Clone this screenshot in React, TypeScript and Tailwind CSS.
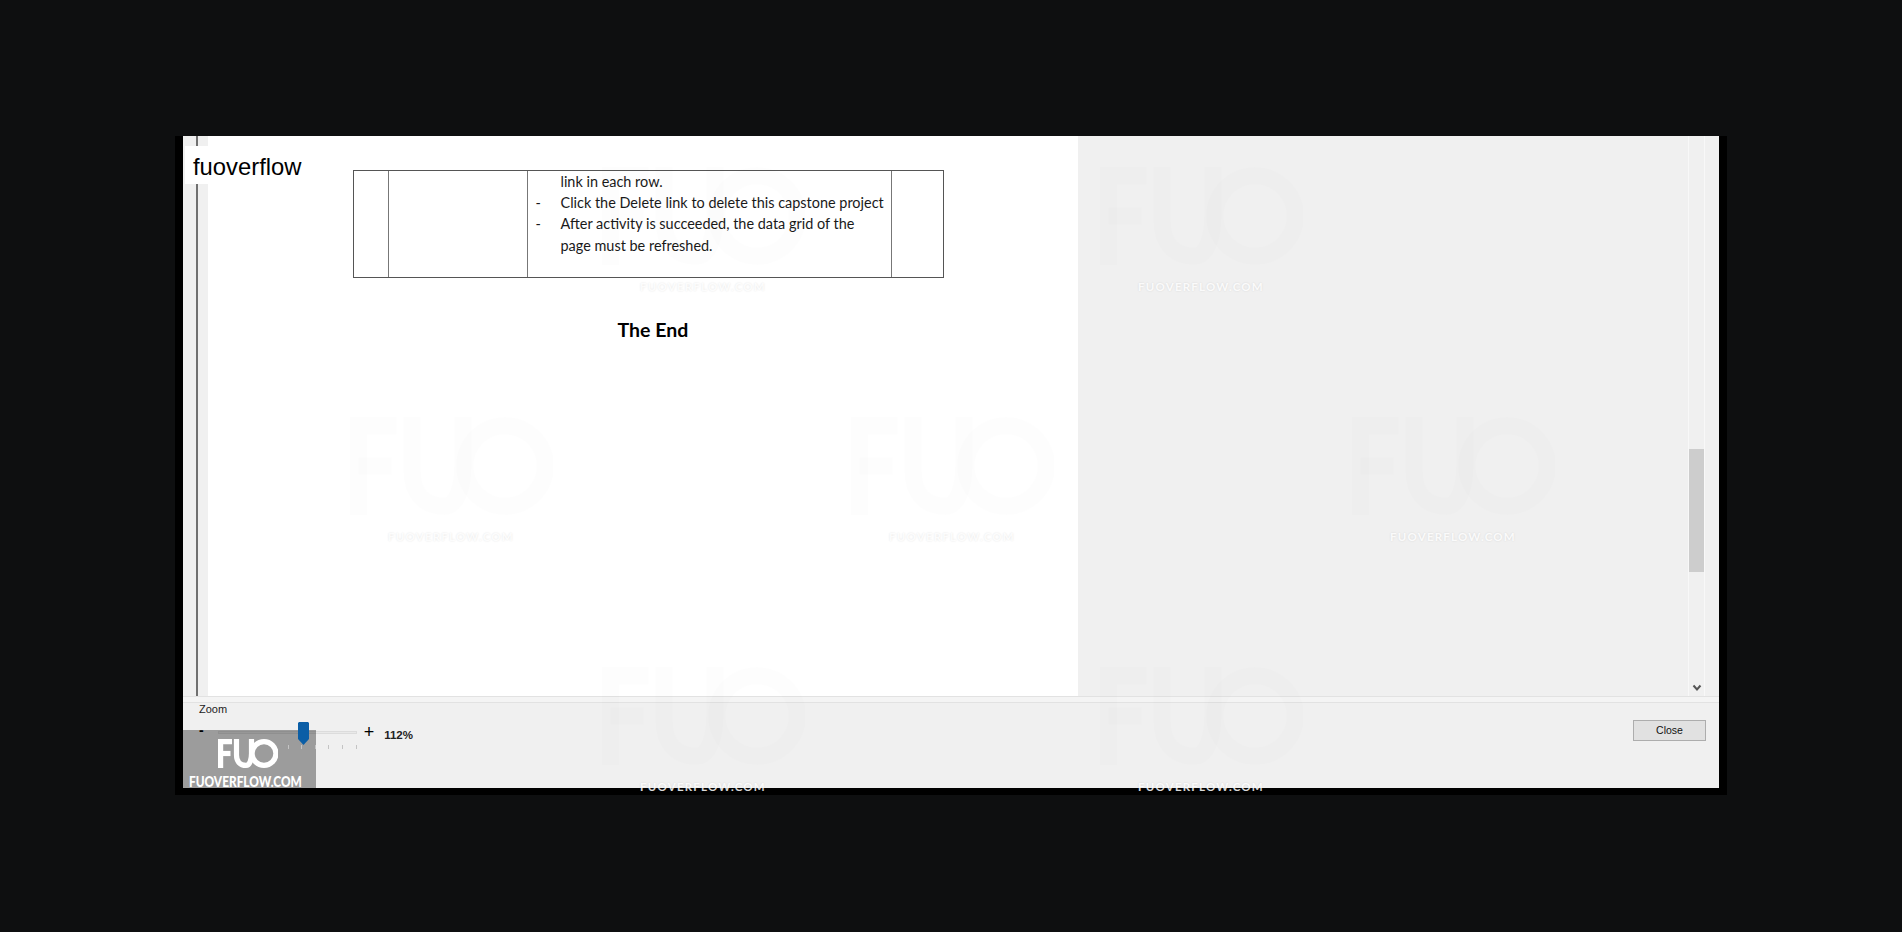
import React from 'react';

const sans = "font-['Liberation_Sans',Arial,sans-serif]";
const doc = "font-['Lato','Noto_Sans',sans-serif]";

// merged FUO mark, used for the corner badge and the faint page watermarks
const FuoMark = ({ className }: { className: string }) => (
  <svg viewBox="0 0 60 29" className={className} fill="none" stroke="currentColor" strokeWidth="5.200">
    <path d="M2.600 29V2.600H14" />
    <path d="M2.600 14.500H12.500" />
    <path d="M18.500 0V16C18.500 22.500 22 26.400 28 26.400C32 26.400 33.500 20 33.500 14.500V0" />
    <circle cx="46" cy="14.500" r="11.900" />
  </svg>
);

const marks = [
  { left: 'left-[601px]', top: 'top-[167px]' },
  { left: 'left-[1099px]', top: 'top-[167px]' },
  { left: 'left-[349px]', top: 'top-[417px]' },
  { left: 'left-[850px]', top: 'top-[417px]' },
  { left: 'left-[1351px]', top: 'top-[417px]' },
  { left: 'left-[601px]', top: 'top-[667px]' },
  { left: 'left-[1099px]', top: 'top-[667px]' },
];

const Watermark = ({ left, top }: { left: string; top: string }) => (
  <div className={`absolute ${left} ${top} pointer-events-none flex w-[204px] flex-col items-center`}>
    <FuoMark className="h-[98px] w-[204px] text-black/[0.008]" />
    <span className={`${doc} mt-[15px] text-[11.500px] font-bold leading-[14px] tracking-[1.2px] text-white/85 [text-shadow:0_0_2px_rgba(0,0,0,0.12)]`}>
      FUOVERFLOW.COM
    </span>
  </div>
);

const Row = ({ dash, children }: { dash?: boolean; children: React.ReactNode }) => (
  <div className="flex h-[21.300px] items-center">
    <span className="w-[33px] shrink-0 pl-[8px]">{dash ? '-' : ''}</span>
    <span className="shrink-0 whitespace-nowrap">{children}</span>
  </div>
);

const SpecTable = () => (
  <div className={`${doc} ml-[145px] mt-[34px] flex h-[108px] w-[591px] border border-[#555] text-[14.450px] text-[#1a1a1a]`}>
    <div className="w-[35px] border-r border-r-[#777]" />
    <div className="w-[139px] border-r border-r-[#777]" />
    <div className="w-[364px] border-r border-r-[#777]">
      <Row>link in each row.</Row>
      <Row dash>Click the Delete link to delete this capstone project</Row>
      <Row dash>After activity is succeeded, the data grid of the</Row>
      <Row>page must be refreshed.</Row>
    </div>
  </div>
);

const Scrollbar = () => (
  <div className="ml-auto mr-[14px] flex w-[17px] flex-col border-x border-x-[#f8f8f8]">
    <div className="mt-[313px] h-[123px] bg-[#cdcdcd]" />
    <div className="mt-auto mb-[4px] flex justify-center">
      <svg width="10" height="8" viewBox="0 0 10 8" fill="none" stroke="#555" strokeWidth="2">
        <path d="M1.500 1.500L5 5.500L8.500 1.500" />
      </svg>
    </div>
  </div>
);

const ZoomSlider = () => (
  <div className="relative ml-[14px] mt-[1px] h-[26px] w-[139px]">
    <div className="absolute left-0 right-0 top-[10px] h-[3px] border border-[#dcdcdc] bg-[#e9e9e9]" />
    <svg className="absolute left-[80px] top-0 z-10" width="11" height="24" viewBox="0 0 11 24">
      <path d="M1 1H10L11 2V18L5.500 24L0 18V2Z" fill="#0b5ea6" />
    </svg>
    <div className="absolute left-[70px] right-0 top-[24px] z-10 flex justify-between">
      {[0, 1, 2, 3, 4, 5].map((i) => (
        <div key={i} className="h-[4px] w-px bg-[#c4c4c4]" />
      ))}
    </div>
  </div>
);

const CornerBadge = () => (
  <div className="absolute bottom-0 left-0 flex h-[58px] w-[133px] flex-col items-center bg-black/35">
    <FuoMark className="ml-[-4px] mt-[9px] h-[29px] w-[60px] shrink-0 text-white" />
    <span className={`${doc} mr-[8px] mt-[6px] scale-x-[0.79] whitespace-nowrap text-[15px] font-black leading-[14px] text-white`}>FUOVERFLOW.COM</span>
  </div>
);

export default function App() {
  return (
    <div className={`${sans} relative h-[932px] w-[1902px] overflow-hidden bg-[#0e0f10] pl-[175px] pt-[136px]`}>
      <div className="w-[1552px] bg-black px-[8px] pb-[7px]">
        <div className="relative flex h-[652px] w-[1536px] flex-col bg-[#f0f0f0]">
          <div className="flex h-[560px]">
            <div className="ml-[12.500px] mr-[10px] w-[2px] bg-[#707070]" />
            <div className="w-[870px] bg-white">
              <SpecTable />
              <div className={`${doc} ml-[410px] mt-[40px] text-[19.500px] font-bold leading-[24px] text-black`}>The End</div>
            </div>
            <Scrollbar />
          </div>
          <div className="h-[7px] border-y border-y-[#e2e2e2] bg-[#f4f4f4]" />
          <div className="flex flex-1 pl-[16px] pr-[13px]">
            <div className="flex flex-col">
              <div className="text-[11px] leading-[13px] text-[#222]">Zoom</div>
              <div className="mt-[4px] flex items-start">
                <span className="relative z-10 text-[14px] font-bold leading-[20px] text-black">-</span>
                <ZoomSlider />
                <span className="ml-[7px] mt-[2px] text-[18px] leading-[20px] text-black">+</span>
                <span className="ml-[10px] mt-[7px] text-[11.500px] font-bold leading-[16px] text-[#222]">112%</span>
              </div>
            </div>
            <div className="ml-auto mt-[17px] flex h-[21px] w-[73px] items-center justify-center border border-[#adadad] bg-[#e1e1e1] text-[10.500px] text-[#111]">
              Close
            </div>
          </div>
          <div className={`${sans} absolute left-[2px] top-[10px] bg-white pb-[0px] pl-[8px] pr-[3px] pt-[4px] text-[23.800px] leading-[34px] text-black`}>
            fuoverflow
          </div>
          <CornerBadge />
        </div>
      </div>
      {marks.map((m) => (
        <Watermark key={m.left + m.top} left={m.left} top={m.top} />
      ))}
    </div>
  );
}
